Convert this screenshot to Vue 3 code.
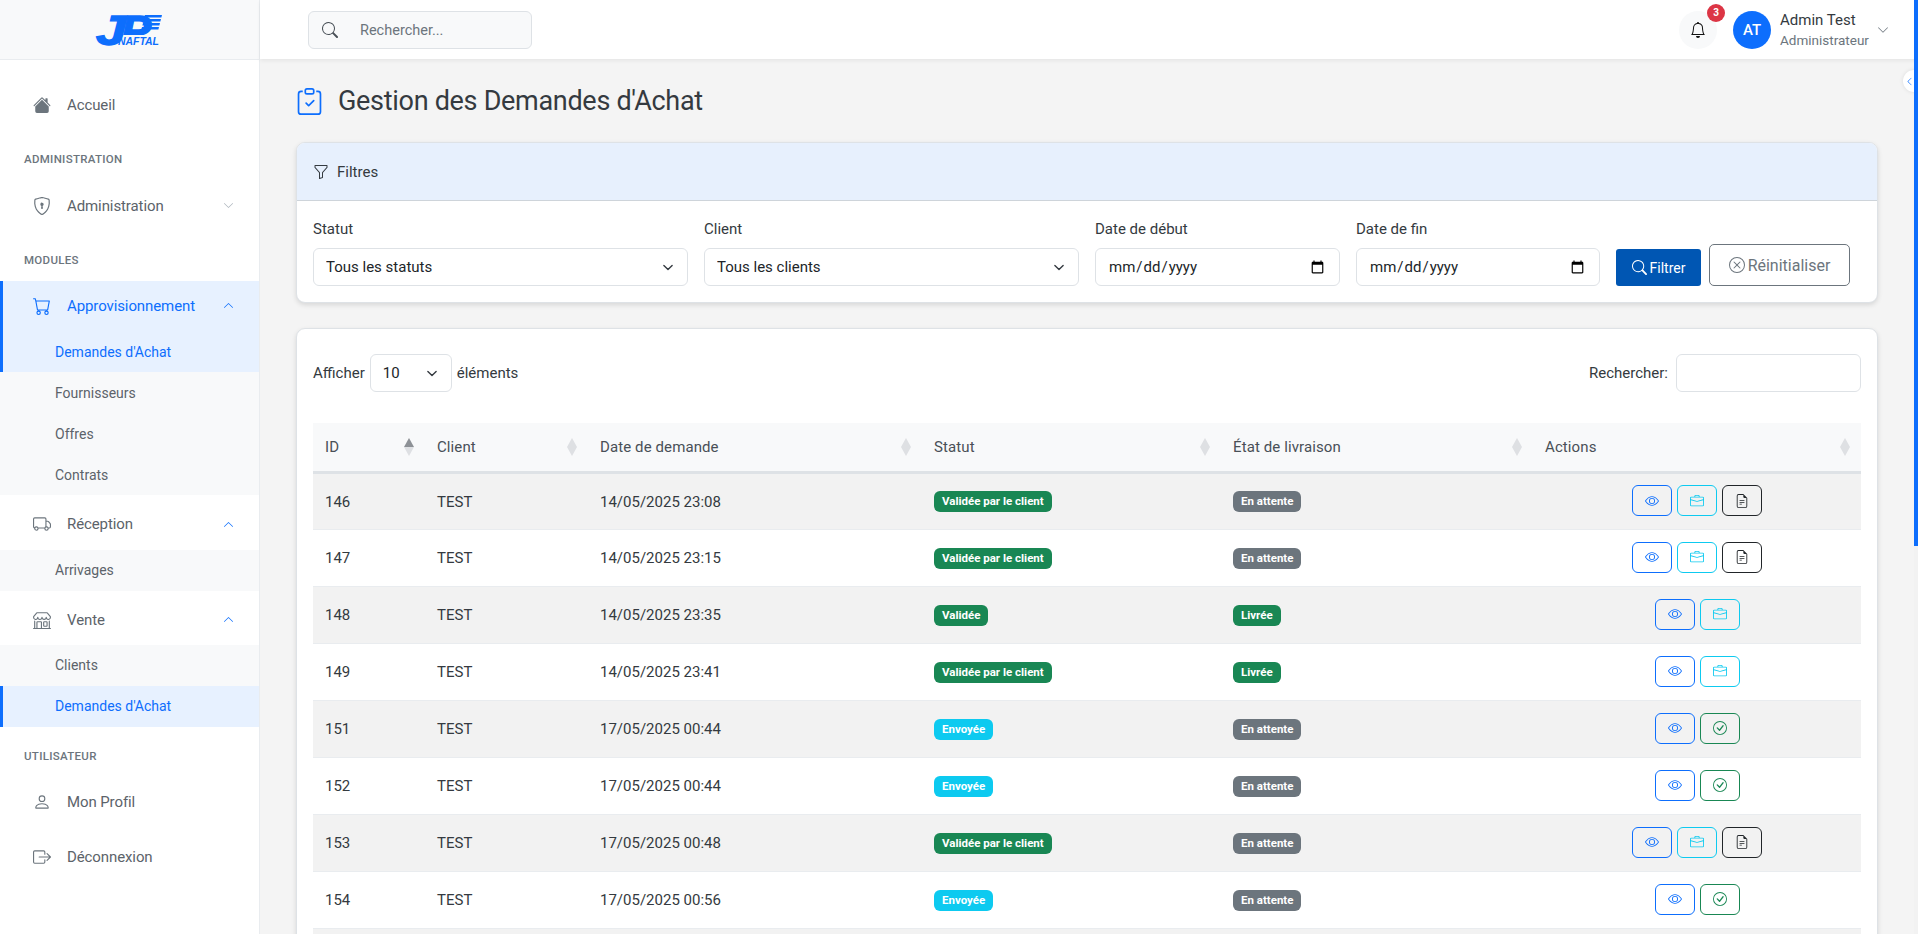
<template>
  <div class="app">
    <aside class="sidebar">
      <div class="brand">
        <svg class="logo" viewBox="0 0 66 30">
          <defs>
            <clipPath id="logo-top"><rect x="20" y="-2" width="40" height="22" /></clipPath>
          </defs>
          <text x="0" y="30" textLength="30" lengthAdjust="spacingAndGlyphs" class="logo-jp">J</text>
          <text x="25" y="30" textLength="30" lengthAdjust="spacingAndGlyphs" class="logo-jp" clip-path="url(#logo-top)">P</text>
          <g fill="#0d6efd">
            <polygon points="49,0 66,0 65.4,2.6 48.4,2.6" />
            <polygon points="48,4 65,4 64.4,6.6 47.4,6.6" />
            <polygon points="47,8 64,8 63.4,10.6 46.4,10.6" />
            <polygon points="46,12 63,12 62.4,14.6 45.4,14.6" />
          </g>
          <text x="22" y="30" textLength="41" lengthAdjust="spacingAndGlyphs" class="logo-name">NAFTAL</text>
        </svg>
      </div>
      <nav class="nav">
        <template v-for="entry in menu" :key="entry.label">
          <div v-if="entry.section" class="nav-section">{{ entry.label }}</div>
          <template v-else>
            <a class="nav-item" :class="{ active: entry.active }">
              <Icon class="nav-icon" :paths="icons[entry.icon]" />
              <span class="nav-text">{{ entry.label }}</span>
              <Icon
                v-if="entry.arrow"
                class="nav-arrow"
                :class="{ open: entry.children }"
                :paths="icons.chevron"
              />
            </a>
            <div v-if="entry.children" class="submenu">
              <a
                v-for="child in entry.children"
                :key="child.label"
                class="sub-item"
                :class="{ active: child.active }"
              >{{ child.label }}</a>
            </div>
          </template>
        </template>
      </nav>
    </aside>

    <div class="main">
      <header class="topbar">
        <div class="search">
          <Icon class="search-icon" :paths="icons.search" />
          <span class="search-text">Rechercher...</span>
        </div>
        <div class="top-right">
          <div class="bell">
            <Icon class="bell-icon" :paths="icons.bell" />
            <span class="bell-badge">3</span>
          </div>
          <div class="avatar">AT</div>
          <div class="user">
            <div class="user-name">Admin Test</div>
            <div class="user-role">Administrateur</div>
          </div>
          <Icon class="user-arrow" :paths="icons.chevron" />
        </div>
      </header>

      <main class="content">
        <h1 class="page-title">
          <Icon class="title-icon" :paths="icons.clipboard" />
          Gestion des Demandes d'Achat
        </h1>

        <section class="card filters">
          <div class="filters-head">
            <Icon class="funnel" :paths="icons.funnel" />
            Filtres
          </div>
          <div class="filters-body">
            <label class="field">
              Statut
              <select class="control"><option>Tous les statuts</option></select>
            </label>
            <label class="field">
              Client
              <select class="control"><option>Tous les clients</option></select>
            </label>
            <label class="field">
              Date de début
              <input class="control" type="date" />
            </label>
            <label class="field">
              Date de fin
              <input class="control" type="date" />
            </label>
            <div class="filter-actions">
              <button class="btn-filter">
                <Icon class="btn-icon" :paths="icons.search" />Filtrer
              </button>
              <button class="btn-reset">
                <Icon class="btn-icon" :paths="icons.xcircle" />Réinitialiser
              </button>
            </div>
          </div>
        </section>

        <section class="card table-card">
          <div class="table-tools">
            <div class="length">
              Afficher
              <select class="control small"><option>10</option></select>
              éléments
            </div>
            <div class="table-search">
              Rechercher:
              <input class="control search-input" type="text" />
            </div>
          </div>

          <table class="grid">
            <colgroup>
              <col v-for="col in columns" :key="col.label" :style="{ width: col.width + 'px' }" />
            </colgroup>
            <thead>
              <tr>
                <th v-for="col in columns" :key="col.label">
                  {{ col.label }}
                  <span class="sort" :class="{ sorted: col.sorted }"><i></i><i></i></span>
                </th>
              </tr>
            </thead>
            <tbody>
              <tr v-for="row in rows" :key="row.id">
                <td>{{ row.id }}</td>
                <td>TEST</td>
                <td>{{ row.date }}</td>
                <td><span class="badge" :class="badgeClass[row.status]">{{ row.status }}</span></td>
                <td><span class="badge" :class="badgeClass[row.delivery]">{{ row.delivery }}</span></td>
                <td class="actions">
                  <button
                    v-for="action in row.actions"
                    :key="action"
                    class="act"
                    :class="action"
                  >
                    <Icon class="act-icon" :paths="icons[action]" />
                  </button>
                </td>
              </tr>
              <!-- ligne suivante, à peine visible en bas de l'écran -->
              <tr><td colspan="6"></td></tr>
            </tbody>
          </table>
        </section>
      </main>
    </div>

    <button class="collapse-btn">
      <Icon class="collapse-icon" :paths="icons.chevron" />
    </button>
    <div class="scrollbar"><div class="thumb"></div></div>
  </div>
</template>

<script setup>
import { h } from 'vue'

// petit composant pour les icônes (tracés bootstrap-icons, viewBox 16x16)
const Icon = (props) =>
  h(
    'svg',
    { viewBox: '0 0 16 16', fill: 'currentColor' },
    props.paths.map((d) => h('path', { d })),
  )
Icon.props = ['paths']

const icons = {
  home: [
    'M8.707 1.5a1 1 0 0 0-1.414 0L.646 8.146a.5.5 0 0 0 .708.708L8 2.207l6.646 6.647a.5.5 0 0 0 .708-.708L13 5.793V2.5a.5.5 0 0 0-.5-.5h-1a.5.5 0 0 0-.5.5v1.293z',
    'm8 3.293 6 6V13.5a1.5 1.5 0 0 1-1.5 1.5h-9A1.5 1.5 0 0 1 2 13.5V9.293z',
  ],
  shield: [
    'M5.338 1.59a61 61 0 0 0-2.837.856.48.48 0 0 0-.328.39c-.554 4.157.726 7.19 2.253 9.188a10.7 10.7 0 0 0 2.287 2.233c.346.244.652.42.893.533q.18.085.293.118a1 1 0 0 0 .101.025 1 1 0 0 0 .1-.025q.114-.034.294-.118c.24-.113.547-.29.893-.533a10.7 10.7 0 0 0 2.287-2.233c1.527-1.997 2.807-5.031 2.253-9.188a.48.48 0 0 0-.328-.39c-.651-.213-1.75-.56-2.837-.855C9.552 1.29 8.531 1.067 8 1.067c-.53 0-1.552.223-2.662.524zM5.072.56C6.157.265 7.31 0 8 0s1.843.265 2.928.56c1.11.3 2.229.655 2.887.87a1.54 1.54 0 0 1 1.044 1.262c.596 4.477-.787 7.795-2.465 9.99a11.8 11.8 0 0 1-2.517 2.453 7 7 0 0 1-1.048.625c-.28.132-.581.24-.829.24s-.548-.108-.829-.24a7 7 0 0 1-1.048-.625 11.8 11.8 0 0 1-2.517-2.453C1.928 10.487.545 7.169 1.141 2.692A1.54 1.54 0 0 1 2.185 1.43 63 63 0 0 1 5.072.56',
    'M9.5 6.5a1.5 1.5 0 0 1-1 1.415l.385 1.99a.5.5 0 0 1-.491.595h-.788a.5.5 0 0 1-.49-.595l.384-1.99a1.5 1.5 0 1 1 2-1.415',
  ],
  cart: [
    'M0 1.5A.5.5 0 0 1 .5 1H2a.5.5 0 0 1 .485.379L2.89 3H14.5a.5.5 0 0 1 .491.592l-1.5 8A.5.5 0 0 1 13 12H4a.5.5 0 0 1-.491-.408L2.01 3.607 1.61 2H.5a.5.5 0 0 1-.5-.5M3.102 4l1.313 7h8.17l1.313-7zM5 12a2 2 0 1 0 0 4 2 2 0 0 0 0-4m7 0a2 2 0 1 0 0 4 2 2 0 0 0 0-4m-7 1a1 1 0 1 1 0 2 1 1 0 0 1 0-2m7 0a1 1 0 1 1 0 2 1 1 0 0 1 0-2',
  ],
  truck: [
    'M0 3.5A1.5 1.5 0 0 1 1.5 2h9A1.5 1.5 0 0 1 12 3.5V5h1.02a1.5 1.5 0 0 1 1.17.563l1.481 1.85a1.5 1.5 0 0 1 .329.938V10.5a1.5 1.5 0 0 1-1.5 1.5H14a2 2 0 1 1-4 0H5a2 2 0 1 1-3.998-.085A1.5 1.5 0 0 1 0 10.5zm1.294 7.456A2 2 0 0 1 4.732 11h5.536a2 2 0 0 1 .732-.732V3.5a.5.5 0 0 0-.5-.5h-9a.5.5 0 0 0-.5.5v7a.5.5 0 0 0 .294.456M12 10a2 2 0 0 1 1.732 1h.768a.5.5 0 0 0 .5-.5V8.35a.5.5 0 0 0-.11-.312l-1.48-1.85A.5.5 0 0 0 13.02 6H12zm-9 1a1 1 0 1 0 0 2 1 1 0 0 0 0-2m9 0a1 1 0 1 0 0 2 1 1 0 0 0 0-2',
  ],
  shop: [
    'M2.97 1.35A1 1 0 0 1 3.73 1h8.54a1 1 0 0 1 .76.35l2.609 3.044A1.5 1.5 0 0 1 16 5.37v.255a2.375 2.375 0 0 1-4.25 1.458A2.37 2.37 0 0 1 9.875 8 2.37 2.37 0 0 1 8 7.083 2.37 2.37 0 0 1 6.125 8a2.37 2.37 0 0 1-1.875-.917A2.375 2.375 0 0 1 0 5.625V5.37a1.5 1.5 0 0 1 .361-.976zm1.78 4.275a1.375 1.375 0 0 0 2.75 0 .5.5 0 0 1 1 0 1.375 1.375 0 0 0 2.75 0 .5.5 0 0 1 1 0 1.375 1.375 0 1 0 2.75 0V5.37a.5.5 0 0 0-.12-.325L12.27 2H3.73L1.12 5.045A.5.5 0 0 0 1 5.37v.255a1.375 1.375 0 0 0 2.75 0 .5.5 0 0 1 1 0M1.5 8.5A.5.5 0 0 1 2 9v6h1v-5a1 1 0 0 1 1-1h3a1 1 0 0 1 1 1v5h6V9a.5.5 0 0 1 1 0v6h.5a.5.5 0 0 1 0 1H.5a.5.5 0 0 1 0-1H1V9a.5.5 0 0 1 .5-.5M4 15h3v-5H4zm5-5a1 1 0 0 1 1-1h2a1 1 0 0 1 1 1v3a1 1 0 0 1-1 1h-2a1 1 0 0 1-1-1zm3 0h-2v3h2z',
  ],
  person: [
    'M8 8a3 3 0 1 0 0-6 3 3 0 0 0 0 6m2-3a2 2 0 1 1-4 0 2 2 0 0 1 4 0m4 8c0 1-1 1-1 1H3s-1 0-1-1 1-4 6-4 6 3 6 4m-1-.004c-.001-.246-.154-.986-.832-1.664C11.516 10.68 10.289 10 8 10s-3.516.68-4.168 1.332c-.678.678-.83 1.418-.832 1.664z',
  ],
  logout: [
    'M10 12.5a.5.5 0 0 1-.5.5h-8a.5.5 0 0 1-.5-.5v-9a.5.5 0 0 1 .5-.5h8a.5.5 0 0 1 .5.5v2a.5.5 0 0 0 1 0v-2A1.5 1.5 0 0 0 9.5 2h-8A1.5 1.5 0 0 0 0 3.5v9A1.5 1.5 0 0 0 1.5 14h8a1.5 1.5 0 0 0 1.5-1.5v-2a.5.5 0 0 0-1 0z',
    'M15.854 8.354a.5.5 0 0 0 0-.708l-3-3a.5.5 0 0 0-.708.708L14.293 7.5H5.5a.5.5 0 0 0 0 1h8.793l-2.147 2.146a.5.5 0 0 0 .708.708z',
  ],
  chevron: [
    'M1.646 4.646a.5.5 0 0 1 .708 0L8 10.293l5.646-5.647a.5.5 0 0 1 .708.708l-6 6a.5.5 0 0 1-.708 0l-6-6a.5.5 0 0 1 0-.708',
  ],
  search: [
    'M11.742 10.344a6.5 6.5 0 1 0-1.397 1.398h-.001q.044.06.098.115l3.85 3.85a1 1 0 0 0 1.415-1.414l-3.85-3.85a1 1 0 0 0-.115-.1zM12 6.5a5.5 5.5 0 1 1-11 0 5.5 5.5 0 0 1 11 0',
  ],
  bell: [
    'M8 16a2 2 0 0 0 2-2H6a2 2 0 0 0 2 2M8 1.918l-.797.161A4 4 0 0 0 4 6c0 .628-.134 2.197-.459 3.742-.16.767-.376 1.566-.663 2.258h10.244c-.287-.692-.502-1.49-.663-2.258C12.134 8.197 12 6.628 12 6a4 4 0 0 0-3.203-3.92zM14.22 12c.223.447.481.801.78 1H1c.299-.199.557-.553.78-1C2.68 10.2 3 6.88 3 6c0-2.42 1.72-4.44 4.005-4.901a1 1 0 1 1 1.99 0A5 5 0 0 1 13 6c0 .88.32 4.2 1.22 6',
  ],
  clipboard: [
    'M10.854 7.146a.5.5 0 0 1 0 .708l-3 3a.5.5 0 0 1-.708 0l-1.5-1.5a.5.5 0 1 1 .708-.708L7.5 9.793l2.646-2.647a.5.5 0 0 1 .708 0',
    'M4 1.5H3a2 2 0 0 0-2 2V14a2 2 0 0 0 2 2h10a2 2 0 0 0 2-2V3.5a2 2 0 0 0-2-2h-1v1h1a1 1 0 0 1 1 1V14a1 1 0 0 1-1 1H3a1 1 0 0 1-1-1V3.5a1 1 0 0 1 1-1h1z',
    'M9.5 1a.5.5 0 0 1 .5.5v1a.5.5 0 0 1-.5.5h-3a.5.5 0 0 1-.5-.5v-1a.5.5 0 0 1 .5-.5zm-3-1A1.5 1.5 0 0 0 5 1.5v1A1.5 1.5 0 0 0 6.5 4h3A1.5 1.5 0 0 0 11 2.5v-1A1.5 1.5 0 0 0 9.5 0z',
  ],
  funnel: [
    'M1.5 1.5A.5.5 0 0 1 2 1h12a.5.5 0 0 1 .5.5v2a.5.5 0 0 1-.128.334L10 8.692V13.5a.5.5 0 0 1-.342.474l-3 1A.5.5 0 0 1 6 14.5V8.692L1.628 3.834A.5.5 0 0 1 1.5 3.5zm1 .5v1.308l4.372 4.858A.5.5 0 0 1 7 8.5v5.306l2-.666V8.5a.5.5 0 0 1 .128-.334L13.5 3.308V2z',
  ],
  xcircle: [
    'M8 15A7 7 0 1 1 8 1a7 7 0 0 1 0 14m0 1A8 8 0 1 0 8 0a8 8 0 0 0 0 16',
    'M4.646 4.646a.5.5 0 0 1 .708 0L8 7.293l2.646-2.647a.5.5 0 0 1 .708.708L8.707 8l2.647 2.646a.5.5 0 0 1-.708.708L8 8.707l-2.646 2.647a.5.5 0 0 1-.708-.708L7.293 8 4.646 5.354a.5.5 0 0 1 0-.708',
  ],
  view: [
    'M16 8s-3-5.5-8-5.5S0 8 0 8s3 5.5 8 5.5S16 8 16 8M1.173 8a13 13 0 0 1 1.66-2.043C4.12 4.668 5.88 3.5 8 3.5s3.879 1.168 5.168 2.457A13 13 0 0 1 14.828 8q-.086.13-.195.288c-.335.48-.83 1.12-1.465 1.755C11.879 11.332 10.119 12.5 8 12.5s-3.879-1.168-5.168-2.457A13 13 0 0 1 1.172 8z',
    'M8 5.5a2.5 2.5 0 1 0 0 5 2.5 2.5 0 0 0 0-5M4.5 8a3.5 3.5 0 1 1 7 0 3.5 3.5 0 0 1-7 0',
  ],
  offer: [
    'M6.5 1A1.5 1.5 0 0 0 5 2.5V3H1.5A1.5 1.5 0 0 0 0 4.5v8A1.5 1.5 0 0 0 1.5 14h13a1.5 1.5 0 0 0 1.5-1.5v-8A1.5 1.5 0 0 0 14.5 3H11v-.5A1.5 1.5 0 0 0 9.5 1zm0 1h3a.5.5 0 0 1 .5.5V3H6v-.5a.5.5 0 0 1 .5-.5m1.886 6.914L15 7.151V12.5a.5.5 0 0 1-.5.5h-13a.5.5 0 0 1-.5-.5V7.15l6.614 1.764a1.5 1.5 0 0 0 .772 0M1.5 4h13a.5.5 0 0 1 .5.5v1.616L8.129 7.948a.5.5 0 0 1-.258 0L1 6.116V4.5a.5.5 0 0 1 .5-.5',
  ],
  doc: [
    'M5.5 7a.5.5 0 0 0 0 1h5a.5.5 0 0 0 0-1zM5 9.5a.5.5 0 0 1 .5-.5h5a.5.5 0 0 1 0 1h-5a.5.5 0 0 1-.5-.5m0 2a.5.5 0 0 1 .5-.5h2a.5.5 0 0 1 0 1h-2a.5.5 0 0 1-.5-.5',
    'M9.5 0H4a2 2 0 0 0-2 2v12a2 2 0 0 0 2 2h8a2 2 0 0 0 2-2V4.5zm0 1v2A1.5 1.5 0 0 0 11 4.5h2V14a1 1 0 0 1-1 1H4a1 1 0 0 1-1-1V2a1 1 0 0 1 1-1z',
  ],
  ok: [
    'M8 15A7 7 0 1 1 8 1a7 7 0 0 1 0 14m0 1A8 8 0 1 0 8 0a8 8 0 0 0 0 16',
    'm10.97 4.97-.02.022-3.473 4.425-2.093-2.094a.75.75 0 0 0-1.06 1.06L6.97 11.03a.75.75 0 0 0 1.079-.02l3.992-4.99a.75.75 0 0 0-1.071-1.05',
  ],
}

const menu = [
  { label: 'Accueil', icon: 'home' },
  { label: 'ADMINISTRATION', section: true },
  { label: 'Administration', icon: 'shield', arrow: true },
  { label: 'MODULES', section: true },
  {
    label: 'Approvisionnement',
    icon: 'cart',
    arrow: true,
    active: true,
    children: [
      { label: "Demandes d'Achat", active: true },
      { label: 'Fournisseurs' },
      { label: 'Offres' },
      { label: 'Contrats' },
    ],
  },
  { label: 'Réception', icon: 'truck', arrow: true, children: [{ label: 'Arrivages' }] },
  {
    label: 'Vente',
    icon: 'shop',
    arrow: true,
    children: [{ label: 'Clients' }, { label: "Demandes d'Achat", active: true }],
  },
  { label: 'UTILISATEUR', section: true },
  { label: 'Mon Profil', icon: 'person' },
  { label: 'Déconnexion', icon: 'logout' },
]

const columns = [
  { label: 'ID', width: 112, sorted: true },
  { label: 'Client', width: 163 },
  { label: 'Date de demande', width: 334 },
  { label: 'Statut', width: 299 },
  { label: 'État de livraison', width: 312 },
  { label: 'Actions', width: 328 },
]

const CLIENT_OK = 'Validée par le client'
const rows = [
  { id: 146, date: '14/05/2025 23:08', status: CLIENT_OK, delivery: 'En attente', actions: ['view', 'offer', 'doc'] },
  { id: 147, date: '14/05/2025 23:15', status: CLIENT_OK, delivery: 'En attente', actions: ['view', 'offer', 'doc'] },
  { id: 148, date: '14/05/2025 23:35', status: 'Validée', delivery: 'Livrée', actions: ['view', 'offer'] },
  { id: 149, date: '14/05/2025 23:41', status: CLIENT_OK, delivery: 'Livrée', actions: ['view', 'offer'] },
  { id: 151, date: '17/05/2025 00:44', status: 'Envoyée', delivery: 'En attente', actions: ['view', 'ok'] },
  { id: 152, date: '17/05/2025 00:44', status: 'Envoyée', delivery: 'En attente', actions: ['view', 'ok'] },
  { id: 153, date: '17/05/2025 00:48', status: CLIENT_OK, delivery: 'En attente', actions: ['view', 'offer', 'doc'] },
  { id: 154, date: '17/05/2025 00:56', status: 'Envoyée', delivery: 'En attente', actions: ['view', 'ok'] },
]

const badgeClass = {
  [CLIENT_OK]: 'green',
  'Validée': 'green',
  'Livrée': 'green',
  'Envoyée': 'cyan',
  'En attente': 'gray',
}
</script>

<style scoped>
svg {
  display: block;
  flex: none;
}

.app {
  position: relative;
  display: flex;
  height: 934px;
  overflow: hidden;
  background: #f4f4f4;
  color: #343a40;
  font-family: Roboto, "Noto Sans", sans-serif;
  font-size: 15px;
}

/* barre latérale */
.sidebar {
  width: 260px;
  flex: none;
  background: #fff;
  border-right: 1px solid #e9ecef;
  box-sizing: border-box;
}

.brand {
  height: 60px;
  box-sizing: border-box;
  background: #f8f9fa;
  border-bottom: 1px solid #e9ecef;
  display: flex;
  justify-content: center;
  align-items: flex-start;
  padding-top: 15px;
  padding-right: 1px;
}

.logo {
  width: 66px;
  height: 30px;
  overflow: visible;
}

.logo-jp {
  font: italic 700 42px "Liberation Sans", sans-serif;
  fill: #0d6efd;
  stroke: #0d6efd;
  stroke-width: 1.4px;
}

.logo-name {
  font: italic 700 11.5px "Liberation Sans", sans-serif;
  fill: #0d6efd;
}

.nav {
  padding-top: 20px;
}

.nav-item {
  display: flex;
  align-items: center;
  height: 50.4px;
  padding: 0 25px 0 33px;
  box-sizing: border-box;
  color: #5c636a;
  margin-bottom: 4.5px;
}

.nav-item:has(+ .nav-section),
.nav-item:has(+ .submenu) {
  margin-bottom: 0;
}

.nav-item.active {
  background: #e7f1ff;
  color: #0d6efd;
  box-shadow: inset 3px 0 0 #0d6efd;
}

.nav-icon {
  width: 18px;
  height: 18px;
  color: #6c757d;
}

.nav-item.active .nav-icon {
  color: #0d6efd;
}

.nav-text {
  margin-left: 16px;
  flex: 1;
  letter-spacing: -0.1px;
}

.nav-arrow {
  width: 11px;
  height: 11px;
  color: #adb5bd;
}

.nav-arrow.open {
  transform: rotate(180deg);
  color: #0d6efd;
}

.nav-section {
  height: 50px;
  box-sizing: border-box;
  padding: 20px 0 0 24px;
  line-height: 18px;
  font-size: 11.5px;
  font-weight: 500;
  letter-spacing: 0.3px;
  color: #6c757d;
}

.submenu {
  background: #f8f9fa;
  margin-bottom: 4px;
}

.submenu:has(+ .nav-section) {
  margin-bottom: 0;
}

.sub-item {
  display: flex;
  align-items: center;
  height: 41px;
  padding-left: 55px;
  font-size: 14px;
  color: #5c636a;
}

.sub-item.active {
  background: #e7f1ff;
  color: #0d6efd;
  box-shadow: inset 3px 0 0 #0d6efd;
}

/* partie principale */
.main {
  flex: 1;
  min-width: 0;
  display: flex;
  flex-direction: column;
}

.topbar {
  height: 59px;
  flex: none;
  background: #fff;
  box-shadow: 0 2px 4px rgba(0, 0, 0, 0.06);
  display: flex;
  align-items: center;
  justify-content: space-between;
  padding: 0 29px 0 48px;
  position: relative;
}

.search {
  width: 224px;
  height: 38px;
  box-sizing: border-box;
  background: #f8f9fa;
  border: 1px solid #dee2e6;
  border-radius: 6px;
  display: flex;
  align-items: center;
  padding-left: 13px;
  color: #6c757d;
  font-size: 14.5px;
}

.search-text {
  padding-top: 2px;
}

.search-icon {
  width: 16px;
  height: 16px;
  margin-right: 22px;
  color: #495057;
}

.top-right {
  display: flex;
  align-items: center;
}

.bell {
  position: relative;
  width: 38px;
  height: 38px;
  border-radius: 50%;
  background: #f8f9fa;
  display: flex;
  align-items: center;
  justify-content: center;
  color: #111;
}

.bell-icon {
  width: 16px;
  height: 16px;
}

.bell-badge {
  position: absolute;
  top: -7px;
  right: -8px;
  width: 18px;
  height: 18px;
  border-radius: 50%;
  background: #dc3545;
  color: #fff;
  font-size: 10px;
  font-weight: 700;
  display: flex;
  align-items: center;
  justify-content: center;
}

.avatar {
  width: 38px;
  height: 38px;
  border-radius: 50%;
  background: #0d6efd;
  color: #fff;
  font-size: 15px;
  font-weight: 500;
  display: flex;
  align-items: center;
  justify-content: center;
  margin-left: 16px;
}

.user {
  margin-left: 9px;
  width: 97px;
}

.user-name {
  font-size: 15px;
  line-height: 20px;
  margin-top: 1px;
  color: #343a40;
}

.user-role {
  font-size: 13.5px;
  line-height: 20px;
  color: #6c757d;
}

.user-arrow {
  width: 12px;
  height: 12px;
  color: #6c757d;
}

.content {
  flex: 1;
  padding: 21px 40px 0 36px;
}

.page-title {
  display: flex;
  align-items: center;
  margin: 0 0 20px;
  height: 42px;
  font-size: 27px;
  font-weight: 400;
  letter-spacing: -0.3px;
  color: #343a40;
}

.title-icon {
  width: 27px;
  height: 27px;
  margin-right: 15px;
  color: #0d6efd;
}

.card {
  background: #fff;
  border: 1px solid #dee2e6;
  border-radius: 9px;
  box-shadow: 0 2px 5px rgba(0, 0, 0, 0.12);
  overflow: hidden;
}

.filters-head {
  height: 58px;
  box-sizing: border-box;
  background: #e7f0fd;
  border-bottom: 1px solid #ced4da;
  display: flex;
  align-items: center;
  padding-left: 16px;
  color: #343a40;
}

.funnel {
  width: 16px;
  height: 16px;
  margin-right: 8px;
}

.filters-body {
  display: grid;
  grid-template-columns: 375px 375px 245px 244px auto;
  column-gap: 16px;
  align-items: end;
  padding: 16px 16px 16px;
}

.field {
  display: flex;
  flex-direction: column;
  gap: 7px;
  line-height: 24px;
}

.control {
  height: 38px;
  box-sizing: border-box;
  border: 1px solid #dee2e6;
  border-radius: 6px;
  background-color: #fff;
  padding: 0 12px;
  font: inherit;
  color: #212529;
  width: 100%;
}

select.control {
  appearance: none;
  background-image: url("data:image/svg+xml,%3csvg xmlns='http://www.w3.org/2000/svg' viewBox='0 0 16 16'%3e%3cpath fill='none' stroke='%23343a40' stroke-linecap='round' stroke-linejoin='round' stroke-width='2' d='m2 5 6 6 6-6'/%3e%3c/svg%3e");
  background-repeat: no-repeat;
  background-position: right 12px center;
  background-size: 14px 11px;
}

.filter-actions {
  display: flex;
  align-items: flex-end;
  gap: 8px;
}

.btn-icon {
  width: 15px;
  height: 15px;
  margin-right: 3px;
}

.btn-filter,
.btn-reset {
  display: flex;
  align-items: center;
  justify-content: center;
  font: inherit;
  font-size: 14px;
  border-radius: 3px;
}

.btn-filter {
  width: 85px;
  height: 37px;
  background: #0056b3;
  color: #fff;
  border: none;
}

.btn-reset {
  width: 141px;
  height: 42px;
  background: #fff;
  color: #6c757d;
  border: 1px solid #6c757d;
  border-radius: 5px;
  font-size: 16px;
}

.btn-reset .btn-icon {
  width: 16px;
  height: 16px;
}

.table-card {
  margin-top: 25px;
  padding: 25px 16px 0;
}

.table-tools {
  display: flex;
  justify-content: space-between;
  align-items: center;
  height: 38px;
  margin-bottom: 31px;
}

.length,
.table-search {
  display: flex;
  align-items: center;
  gap: 5px;
}

.control.small {
  width: 82px;
}

.search-input {
  width: 185px;
  margin-left: 3px;
}

.grid {
  width: 1548px;
  table-layout: fixed;
  border-collapse: collapse;
}

th {
  position: relative;
  height: 48px;
  padding: 0 12px;
  text-align: left;
  font-weight: 400;
  letter-spacing: 0.1px;
  color: #495057;
  background: #f8f9fa;
  border-bottom: 3px solid #dee2e6;
}

td {
  height: 57px;
  padding: 0 12px;
  box-sizing: border-box;
  border-bottom: 1px solid #e9ecef;
  color: #343a40;
}

tbody tr:nth-child(odd) td {
  background: #f2f2f2;
}

.sort {
  position: absolute;
  right: 11px;
  top: 15px;
  display: flex;
  flex-direction: column;
}

.sort i {
  display: block;
  width: 0;
  height: 0;
  border-left: 5px solid transparent;
  border-right: 5px solid transparent;
}

.sort i:first-child {
  border-bottom: 9px solid #dee0e3;
}

.sort i:last-child {
  border-top: 9px solid #dee0e3;
}

.sort.sorted i:first-child {
  border-bottom-color: #8d9196;
}

.badge {
  display: inline-block;
  height: 21px;
  line-height: 21px;
  padding: 0 8px;
  border-radius: 6px;
  font-size: 11.5px;
  font-weight: 700;
  color: #fff;
  vertical-align: middle;
}

.badge.green {
  background: #198754;
}

.badge.gray {
  background: #6c757d;
}

.badge.cyan {
  background: #0dcaf0;
}

.actions {
  font-size: 0;
  text-align: center;
}

.act {
  display: inline-flex;
  align-items: center;
  justify-content: center;
  width: 40px;
  height: 31px;
  margin: 0 2.5px 2px;
  padding: 0;
  background: transparent;
  border: 1px solid;
  border-radius: 6px;
  vertical-align: middle;
}

.act.view {
  color: #0d6efd;
}

.act.offer {
  color: #0dcaf0;
}

.act.doc {
  color: #212529;
}

.act.ok {
  color: #198754;
}

.act-icon {
  width: 14px;
  height: 14px;
}

/* bouton de repli et barre de défilement */
.collapse-btn {
  position: absolute;
  top: 70px;
  right: -7px;
  width: 22px;
  height: 22px;
  padding: 0;
  border: none;
  border-radius: 50%;
  background: #fff;
  box-shadow: 0 0 4px rgba(0, 0, 0, 0.1);
  color: #0d6efd;
}

.collapse-icon {
  width: 9px;
  height: 9px;
  margin-left: 2px;
  transform: rotate(90deg);
}

.scrollbar {
  position: absolute;
  top: 0;
  right: 0;
  bottom: 0;
  width: 4px;
  background: #f2f2f2;
}

.thumb {
  height: 546px;
  background: #0d6efd;
}
</style>

<style>
body {
  margin: 0;
}
</style>
